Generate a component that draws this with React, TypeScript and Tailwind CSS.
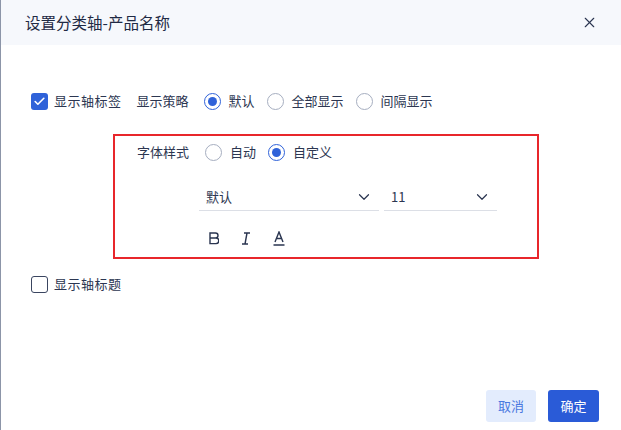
import { X, ChevronDown, Check } from "lucide-react";

const font = { fontFamily: '"Noto Sans CJK SC", "Noto Sans", sans-serif' };

const Radio = ({ checked, label }: { checked?: boolean; label: string }) => (
  <label className="flex items-center">
    <span
      className={
        checked
          ? "w-[17px] h-[17px] rounded-full border border-[#2f62d9] flex items-center justify-center"
          : "w-[17px] h-[17px] rounded-full border border-[#a6aec0]"
      }
    >
      {checked && <span className="w-[9px] h-[9px] rounded-full bg-[#2f62d9]" />}
    </span>
    <span className="ml-[8px]">{label}</span>
  </label>
);

const Checkbox = ({ checked, label }: { checked?: boolean; label: string }) => (
  <label className="flex items-center">
    {checked ? (
      <span className="w-[17px] h-[17px] rounded-[3px] bg-[#2f62d9] flex items-center justify-center">
        <Check size={13} strokeWidth={3} color="#fff" />
      </span>
    ) : (
      <span className="w-[17px] h-[17px] rounded-[3px] border border-[#3a4560]" />
    )}
    <span className="ml-[6px] tracking-[0.5px]">{label}</span>
  </label>
);

const Select = ({ value, width }: { value: string; width: string }) => (
  <div className={`${width} h-[28px] flex items-center justify-between pl-[7px] pr-[6px] border-b border-[#dcdfe6]`}>
    <span>{value}</span>
    <ChevronDown size={18} strokeWidth={1.6} color="#2a3550" />
  </div>
);

export default function App() {
  return (
    <div
      className="w-[621px] h-[430px] bg-white border-l border-[#8c95a8] flex flex-col text-[13px] text-[#2c3651]"
      style={font}
    >
      <div className="h-[45px] bg-[#f6f8fc] flex items-center justify-between pl-[24px] pr-[23px]">
        <span className="text-[15.5px] text-[#1f2a44]">设置分类轴-产品名称</span>
        <X size={17} strokeWidth={1.6} color="#2a3550" />
      </div>

      <div className="flex-1 flex flex-col pl-[30px]">
        <div className="mt-[46px] h-[20px] flex items-center">
          <Checkbox checked label="显示轴标签" />
          <span className="ml-[15px]">显示策略</span>
          <div className="ml-[15px] flex items-center gap-[12px]">
            <Radio checked label="默认" />
            <Radio label="全部显示" />
            <Radio label="间隔显示" />
          </div>
        </div>

        <div className="mt-[23px] ml-[82px] w-[426px] h-[125px] border-2 border-[#e8262b] pl-[22px] pt-[6px]">
          <div className="h-[20px] flex items-center">
            <span>字体样式</span>
            <div className="ml-[16px] flex items-center gap-[12px]">
              <Radio label="自动" />
              <Radio checked label="自定义" />
            </div>
          </div>
          <div className="mt-[21px] ml-[62px] flex items-center gap-[5px]">
            <Select value="默认" width="w-[180px]" />
            <Select value="11" width="w-[113px]" />
          </div>
          <div className="mt-[19px] ml-[72px] flex items-center gap-[22px] h-[16px]">
            <svg width="10" height="13" viewBox="0 0 10 13" fill="none" stroke="#2a3550" strokeWidth="1.4">
              <path d="M1 1h5.5a2.5 2.5 0 0 1 0 5H1V1zM1 6h6a2.8 2.8 0 0 1 0 5.6H1V6z" />
            </svg>
            <svg width="10" height="13" viewBox="0 0 10 13" fill="none" stroke="#2a3550" strokeWidth="1.4">
              <path d="M3 1h6M1 12h6M6 1L4 12" />
            </svg>
            <svg width="12" height="15" viewBox="0 0 12 15" fill="none" stroke="#2a3550" strokeWidth="1.4">
              <path d="M2 11L6 1l4 10M3.5 7.5h5M0.5 14h11" />
            </svg>
          </div>
        </div>

        <div className="mt-[15px] h-[20px] flex items-center">
          <Checkbox label="显示轴标题" />
        </div>
      </div>

      <div className="flex justify-end gap-[12px] pr-[22px] pb-[8px]">
        <button className="w-[50px] h-[32px] rounded-[3px] bg-[#e3ecfd] text-[#4a78e0]">取消</button>
        <button className="w-[51px] h-[32px] rounded-[3px] bg-[#2a5bd7] text-white">确定</button>
      </div>
    </div>
  );
}
